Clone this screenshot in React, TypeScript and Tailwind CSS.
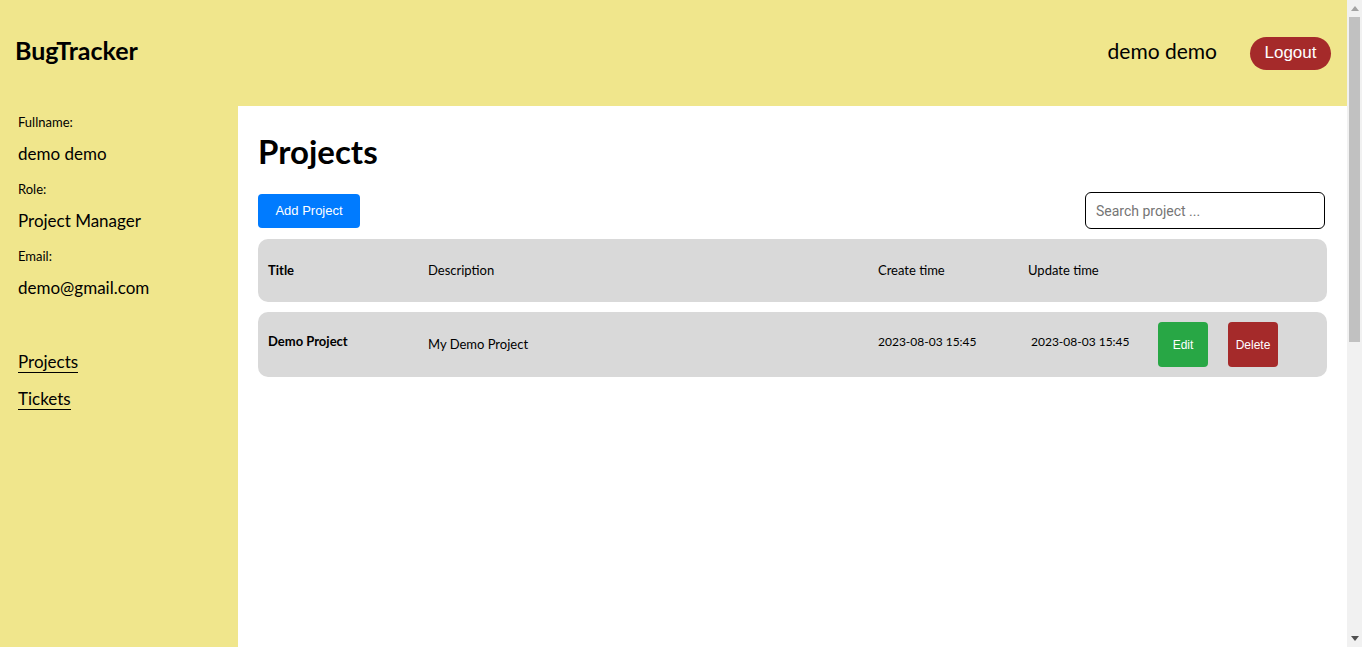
import React from "react";

const sans = "font-['Lato',sans-serif]";
const arial = "font-['Liberation_Sans',Arial,sans-serif]";

function Scrollbar() {
  return (
    <div className="w-[15px] shrink-0 h-full bg-[#f1f1f1] flex flex-col items-center">
      <div className="h-[17px] w-full flex items-center justify-center">
        <svg width="8" height="5" viewBox="0 0 8 5">
          <path d="M0 5 L4 0 L8 5 Z" fill="#a3a3a3" />
        </svg>
      </div>
      <div className="h-[325px] w-[11px] bg-[#c1c1c1]" />
      <div className="flex-1" />
      <div className="h-[17px] w-full flex items-center justify-center">
        <svg width="8" height="5" viewBox="0 0 8 5">
          <path d="M0 0 L8 0 L4 5 Z" fill="#505050" />
        </svg>
      </div>
    </div>
  );
}

export default function App() {
  return (
    <div className={`h-[647px] flex bg-white text-black ${sans} overflow-hidden`}>
      <div className="flex-1 flex flex-col min-w-0">
        <header className="h-[106px] shrink-0 bg-[#f0e68c] flex items-center justify-between pl-[15px] pr-[16px]">
          <div className="text-[25px] font-bold leading-[30px] -mt-[6px]">BugTracker</div>
          <div className="flex items-center">
            <span className="text-[21px] leading-[26px] -mt-[4px]">demo demo</span>
            <button className={`ml-[33px] h-[33px] w-[81px] rounded-full bg-[#a52a2a] text-white text-[17px] ${arial}`}>
              Logout
            </button>
          </div>
        </header>
        <div className="flex flex-1">
          <aside className="w-[238px] shrink-0 bg-[#f0e68c] pl-[18px] pt-[2px]">
            <div className="text-[13px] leading-[20px] mt-[4px]">Fullname:</div>
            <div className="text-[17px] leading-[24px] mt-[10px]">demo demo</div>
            <div className="text-[13px] leading-[20px] mt-[13px]">Role:</div>
            <div className="text-[17px] leading-[24px] mt-[10px]">Project Manager</div>
            <div className="text-[13px] leading-[20px] mt-[13px]">Email:</div>
            <div className="text-[17px] leading-[24px] mt-[10px]">demo@gmail.com</div>
            <div className="flex flex-col items-start mt-[52px] gap-[16px]">
              <a className="text-[17px] leading-[20px] border-b border-black">Projects</a>
              <a className="text-[17px] leading-[20px] border-b border-black">Tickets</a>
            </div>
          </aside>
          <main className="flex-1 px-[20px] pt-[26px]">
            <h1 className="text-[33px] font-bold leading-[38px]">Projects</h1>
            <div className="mt-[22px] flex items-center justify-between pr-[2px]">
              <button className={`h-[34px] w-[102px] rounded-[4px] bg-[#007bff] text-white text-[13px] ${arial}`}>
                Add Project
              </button>
              <input
                placeholder="Search project ..."
                className="h-[37px] w-[240px] rounded-[6px] border border-black px-[10px] text-[14px] placeholder:text-[#757575] font-['Roboto',sans-serif] outline-none"
              />
            </div>
            <div className="mt-[10px] h-[63px] rounded-[10px] bg-[#d9d9d9] flex items-center pl-[10px] text-[13px]">
              <div className="w-[160px] font-bold">Title</div>
              <div className="w-[450px]">Description</div>
              <div className="w-[150px]">Create time</div>
              <div className="w-[130px]">Update time</div>
            </div>
            <div className="mt-[10px] h-[65px] rounded-[10px] bg-[#d9d9d9] flex items-center pl-[10px] text-[13px]">
              <div className="w-[160px] font-bold -mt-[5px]">Demo Project</div>
              <div className="w-[450px]">My Demo Project</div>
              <div className="w-[153px] -mt-[5px] text-[12px]">2023-08-03 15:45</div>
              <div className="w-[127px] -mt-[5px] text-[12px]">2023-08-03 15:45</div>
              <button className={`h-[45px] w-[50px] rounded-[4px] bg-[#28a745] text-white text-[12px] ${arial}`}>Edit</button>
              <button className={`ml-[20px] h-[45px] w-[50px] rounded-[4px] bg-[#a52a2a] text-white text-[12px] ${arial}`}>Delete</button>
            </div>
          </main>
        </div>
      </div>
      <Scrollbar />
    </div>
  );
}
